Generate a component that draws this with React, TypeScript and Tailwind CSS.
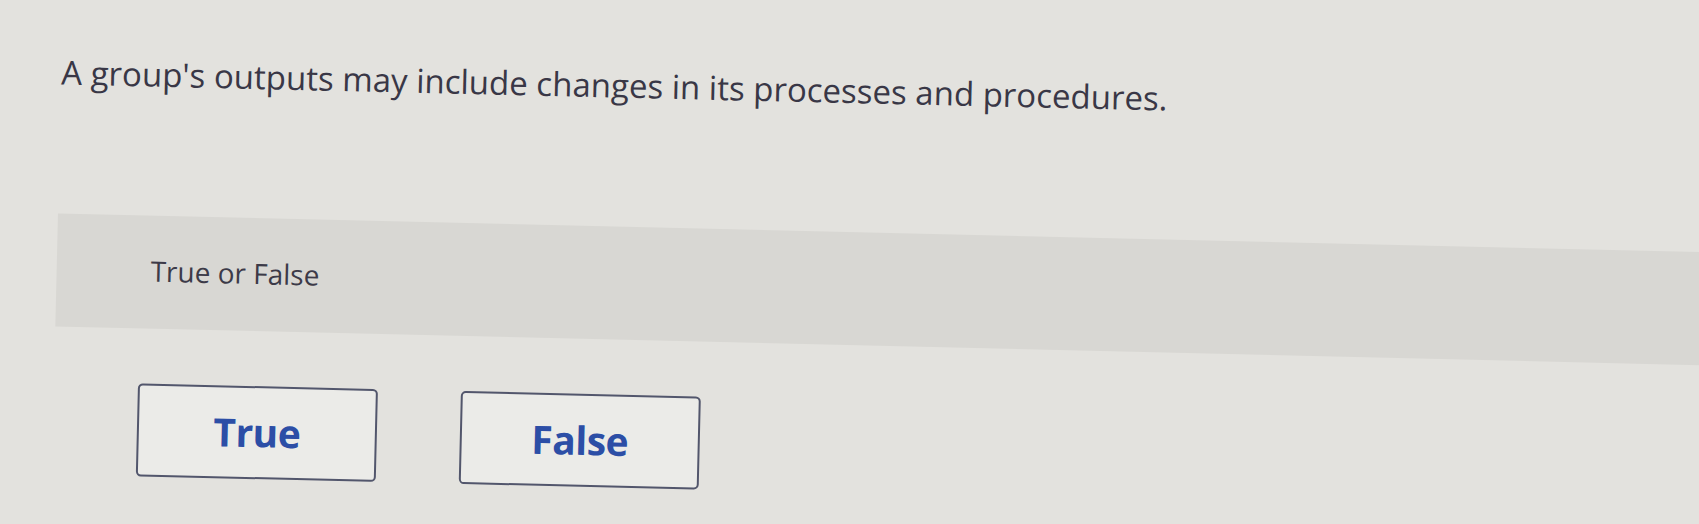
const choices = ["True", "False"];

function ChoiceButton({ label }: { label: string }) {
  return (
    <button
      type="button"
      className="w-[240px] h-[93px] flex items-center justify-center rounded-[5px] border-2 border-[#52566c] bg-[#ebebe8] text-[39px] font-bold text-[#2c4ea6] tracking-[-0.5px]"
    >
      {label}
    </button>
  );
}

export default function App() {
  return (
    <div className="w-[1699px] h-[524px] overflow-hidden bg-[#e3e2de] font-['Open_Sans',Arial,sans-serif]">
      <div className="w-[1800px] origin-top-left rotate-[1.35deg]">
        <div className="pl-[63px] pt-[51px] h-[212px]">
          <h1 className="text-[33px] leading-[40px] text-[#393746]">
            A group's outputs may include changes in its processes and procedures.
          </h1>
        </div>

        <div className="ml-[63px] h-[113px] bg-[#d8d7d3] pl-[94px] pt-[38px]">
          <p className="text-[28px] leading-[34px] text-[#3c3a48]">True or False</p>
        </div>

        <div className="flex gap-[83px] pl-[147px] pt-[55px]">
          {choices.map((c) => (
            <ChoiceButton key={c} label={c} />
          ))}
        </div>
      </div>
    </div>
  );
}
